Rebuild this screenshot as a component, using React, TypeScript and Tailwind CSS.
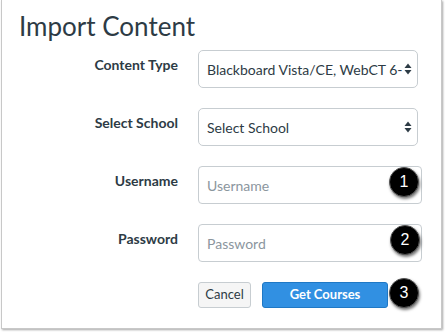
import React from "react";

function Arrows() {
  return (
    <svg width="8" height="12" viewBox="0 0 8 12" className="shrink-0">
      <path d="M4 0.5 L7.5 5 L0.5 5 Z" fill="#2d3b45" />
      <path d="M4 11.5 L7.5 7 L0.5 7 Z" fill="#2d3b45" />
    </svg>
  );
}

function Badge({ n, className }: { n: string; className: string }) {
  return (
    <div
      className={
        "absolute w-[30px] h-[30px] rounded-full bg-black border border-[#555] flex items-center justify-center text-white text-[16px] shadow-[1px_2px_3px_rgba(0,0,0,0.55)] " +
        className
      }
      style={{ fontFamily: '"Liberation Sans", Arial, sans-serif' }}
    >
      {n}
    </div>
  );
}

function Row({ label, children }: { label: string; children: React.ReactNode }) {
  return (
    <div className="flex items-start gap-[20px]">
      <div className="w-[159px] shrink-0 text-right pt-[5px] text-[14px] leading-[20px] font-bold text-[#2d3b45]">
        {label}
      </div>
      {children}
    </div>
  );
}

export default function App() {
  return (
    <div
      className="w-[445px] h-[332px] bg-white overflow-hidden"
      style={{ fontFamily: "Lato, 'Open Sans', sans-serif" }}
    >
      <div className="relative ml-[1px] w-[441px] h-[329px] bg-white border-l border-r border-b border-[#c8c8c8] shadow-[1px_1px_2px_rgba(0,0,0,0.35)] pl-[17px] pt-[10px]">
        <h1 className="text-[26px] leading-[32px] font-normal text-[#2d3b45]">
          Import Content
        </h1>
        <div className="mt-[8px] flex flex-col gap-[20px]">
          <Row label="Content Type">
            <div className="w-[220px] h-[38px] rounded-[5px] border border-[#c7cdd1] flex items-center pl-[8px] pr-[5px] text-[14px] text-[#2d3b45]">
              <span className="flex-1 whitespace-nowrap overflow-hidden">Blackboard Vista/CE, WebCT 6-</span>
              <Arrows />
            </div>
          </Row>
          <Row label="Select School">
            <div className="w-[220px] h-[38px] rounded-[5px] border border-[#c7cdd1] flex items-center pl-[8px] pr-[5px] text-[14px] text-[#2d3b45]">
              <span className="flex-1">Select School</span>
              <Arrows />
            </div>
          </Row>
          <Row label="Username">
            <div className="w-[224px] h-[38px] rounded-[4px] border border-[#c7cdd1] flex items-center pl-[8px] text-[14px] text-[#8b969e]">
              Username
            </div>
          </Row>
          <Row label="Password">
            <div className="w-[224px] h-[38px] rounded-[4px] border border-[#c7cdd1] flex items-center pl-[8px] text-[14px] text-[#8b969e]">
              Password
            </div>
          </Row>
          <div className="flex gap-[11px] pl-[179px]">
            <div className="w-[53px] h-[26px] rounded-[3px] border border-[#c7cdd1] bg-[#f5f5f5] flex items-center justify-center text-[13px] text-[#2d3b45]">
              Cancel
            </div>
            <div className="w-[126px] h-[26px] rounded-[3px] border border-[#1f78c5] bg-[#3190e2] flex items-center justify-center text-[13px] font-bold text-white">
              Get Courses
            </div>
          </div>
        </div>
        <Badge n="1" className="left-[387px] top-[167px]" />
        <Badge n="2" className="left-[388px] top-[225px]" />
        <Badge n="3" className="left-[387px] top-[278px]" />
      </div>
    </div>
  );
}
